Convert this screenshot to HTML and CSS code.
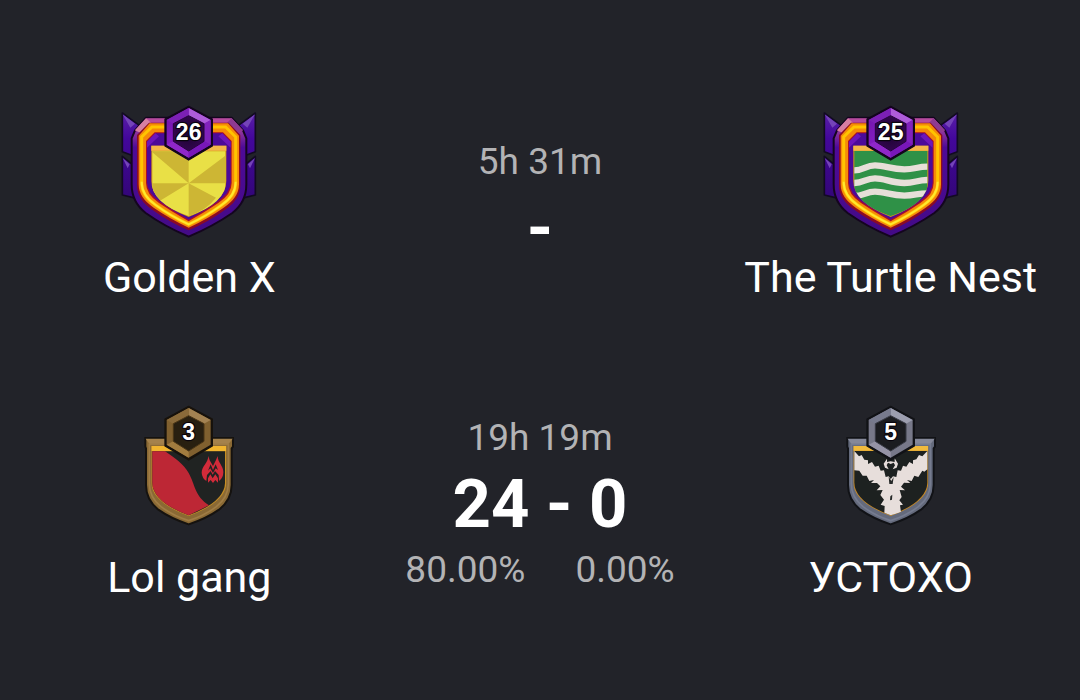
FILE: index.html
```html
<!DOCTYPE html>
<html lang="en">
<head>
<meta charset="utf-8">
<meta name="viewport" content="width=device-width, initial-scale=1">
<title>Wars</title>
<link rel="stylesheet" href="styles.css">
</head>
<body>
<svg class="defs" aria-hidden="true">
  <defs>
    <linearGradient id="wing" x1="0" y1="0" x2="0" y2="1">
      <stop offset="0" stop-color="#5a1fa8"/><stop offset=".3" stop-color="#43079b"/><stop offset="1" stop-color="#330678"/>
    </linearGradient>
    <linearGradient id="rim" x1="0" y1="0" x2="0" y2="1">
      <stop offset="0" stop-color="#b8489c"/><stop offset=".13" stop-color="#8a309c"/><stop offset=".25" stop-color="#4e0a98"/><stop offset="1" stop-color="#430a86"/>
    </linearGradient>
    <linearGradient id="hexPurple" x1="0" y1="0" x2="1" y2="1">
      <stop offset="0" stop-color="#6c13a6"/><stop offset=".5" stop-color="#8a1fc8"/><stop offset="1" stop-color="#6a0fae"/>
    </linearGradient>
    <radialGradient id="hexDark"><stop offset="0" stop-color="#1c0230"/><stop offset="1" stop-color="#32064e"/></radialGradient>
    <clipPath id="field"><path d="M125 152H350V258Q350 322 237 366Q125 322 125 258Z"/></clipPath>
    <clipPath id="plainField"><path d="M125 153H350V262Q350 322 237 363Q125 322 125 262Z"/></clipPath>
    <g id="grandFrame">
      <g fill="url(#wing)" stroke="#120a22" stroke-width="5" stroke-linejoin="round">
        <path d="M38 54L90 92V190L38 170ZM38 184L80 218V310L38 300Z"/>
        <path d="M437 54L385 92V190L437 170ZM437 184L395 218V310L437 300Z"/>
      </g>
      <path d="M39 58L76 86L62 98ZM436 58L399 86L413 98ZM39 189L60 208L54 220ZM436 189L415 208L421 220Z" fill="#7444b8"/>
      <path d="M109 68H366L400 106L410 130V268Q410 322 368 354Q310 394 237 425Q164 394 108 354Q66 322 66 268V130L76 106Z" fill="url(#rim)" stroke="#14051f" stroke-width="6" stroke-linejoin="round"/>
      <path d="M109 70H366L400 106L380 114L356 87H120L94 114L76 106Z" fill="#b64b9e"/>
      <path d="M109 70L128 87L94 114L76 106Z" fill="#d67fa2"/>
      <path d="M366 70L348 87L382 114L400 106Z" fill="#8e3a91"/>
      <path d="M118 83H357L392 120V270Q392 314 346 344Q300 378 237 406Q174 378 128 344Q82 314 82 270V120Z" fill="#8c0b24"/>
      <path d="M120 85H355L388 122V268Q388 308 342 338Q295 371 237 398Q180 371 132 338Q87 308 87 268V122Z" fill="#f58b08"/>
      <path d="M127 96H348L378 126V268Q378 301 336 330Q291 363 237 388Q183 363 138 330Q96 301 96 268V126Z" fill="none" stroke="#ffc400" stroke-width="9"/>
      <path d="M96 260Q96 301 138 330Q183 363 237 388Q291 363 336 330Q378 301 378 260" fill="none" stroke="#ffe82f" stroke-width="6"/>
      <path d="M135 112H340L366 138V264Q366 298 326 324Q285 352 237 379Q190 352 148 324Q109 298 109 264V138Z" fill="#a70e2d"/>
      <path d="M137 115H338L363 140V262Q363 294 322 321Q283 348 237 374Q192 348 152 321Q112 294 112 262V140Z" fill="#4b0a99"/>
      <path d="M137 115L112 140V158L148 124ZM338 115L363 140V158L326 124Z" fill="#6d16ba"/>
      <path d="M125 152H350V258Q350 322 237 366Q125 322 125 258Z" fill="#d19816"/>
      <path d="M125 152H350V167H125Z" fill="#f5b74a"/>
    </g>
    <path id="plainShield" d="M107 129H174V150H300V129H370V155L366 160V270Q366 314 328 344Q290 371 237 388Q184 371 146 344Q109 314 109 270V160L107 155Z"/>
    <path id="hexShape" d="M237 34L308 72V153L237 195L166 153V72Z"/>
    <path id="hexInner" d="M237 62L283 86V139L237 168L191 139V86Z"/>
    <g id="purpleLevel" stroke-linejoin="round">
      <use href="#hexShape" fill="#13051d" stroke="#13051d" stroke-width="4"/>
      <path d="M237 39L303 75V149L237 188L171 149V75Z" fill="url(#hexPurple)"/>
      <path d="M237 39L303 75L283 86L237 62Z" fill="#ae5cda"/>
      <path d="M303 75V149L283 139V86Z" fill="#8122bc"/>
      <path d="M237 39L171 75L191 86L237 62Z" fill="#7c20b5"/>
      <path d="M171 149L237 188V168L191 139Z" fill="#8f27c9"/>
      <path d="M303 149L237 188V168L283 139Z" fill="#7817b8"/>
      <use href="#hexInner" fill="url(#hexDark)" stroke="#25043b" stroke-width="3"/>
    </g>
  </defs>
</svg>

<main class="wars">
  <article class="war">
    <section class="clan">
      <svg class="badge" viewBox="-2 0 480 462" role="img" aria-label="Golden X badge, level 26">
        <use href="#grandFrame"/>
        <g clip-path="url(#field)">
          <path d="M128 169H347V300Q320 334 237 363Q155 334 128 300Z" fill="#e9e046"/>
          <path d="M237 265L128 172V169H237ZM237 265L347 182V265ZM237 265V363Q290 346 319 308ZM237 265H128V300Q134 313 145 321Z" fill="#cdb634"/>
        </g>
        <use href="#purpleLevel"/>
        <text class="level" x="237" y="135">26</text>
      </svg>
      <h2 class="name">Golden X</h2>
    </section>
    <section class="result">
      <p class="time">5h 31m</p>
      <p class="score">-</p>
    </section>
    <section class="clan">
      <svg class="badge" viewBox="-2 0 480 462" role="img" aria-label="The Turtle Nest badge, level 25">
        <use href="#grandFrame"/>
        <g clip-path="url(#field)">
          <path d="M128 168H347V300Q320 334 237 363Q155 334 128 300Z" fill="#2f9147"/>
          <g fill="none" stroke="#e7dfd9" stroke-width="19">
            <path d="M128 226C156 226 162 211 190 211C220 211 238 223 278 223C310 223 316 215 347 215"/>
            <path d="M128 264C156 264 162 250 190 250C220 250 238 264 278 264C310 264 316 255 347 255"/>
            <path d="M128 303C156 303 162 290 190 290C220 290 238 302 278 302C310 302 316 295 347 295"/>
          </g>
        </g>
        <use href="#purpleLevel"/>
        <text class="level" x="237" y="135">25</text>
      </svg>
      <h2 class="name">The Turtle Nest</h2>
    </section>
  </article>

  <article class="war">
    <section class="clan">
      <svg class="badge" viewBox="-2 0 480 462" role="img" aria-label="Lol gang badge, level 3">
        <use href="#plainShield" fill="#8a6934" stroke="#15120f" stroke-width="6"/>
        <path d="M108 131H369L356 148H120Z" fill="#a5824c"/>
        <path d="M119 148H356V266Q356 306 320 335Q286 361 237 377Q188 361 154 335Q119 306 119 266Z" fill="none" stroke="#a07d45" stroke-width="5"/>
        <g clip-path="url(#plainField)">
          <path d="M120 150H355V370H120Z" fill="#c58e24"/>
          <path d="M120 153H355V168H120Z" fill="#f1b52f"/>
          <path d="M128 169H346V263Q345 320 237 361Q129 320 128 263Z" fill="#202322"/>
          <path d="M128 169H166C196 190 222 207 237 234C257 270 254 302 298 331L237 361Q129 320 128 263Z" fill="#bd2735"/>
        </g>
        <path d="M296 183C296 203 276 214 276 233Q277 249 290 258L292 240L303 228L309 239L316 228L327 240L328 258Q341 249 341 231C341 212 324 203 324 183L319 195L310 213L300 196Z" fill="#d22b3a"/>
        <path d="M303 208L310 225L318 208L325 225L318 220L310 234L302 220L295 227Z" fill="#202322"/>
        <path d="M295 263V250L302 238L309 250L317 238L325 250V263L317 255L310 264L303 255Z" fill="#d22b3a"/>
        <g stroke-linejoin="round">
          <use href="#hexShape" fill="#17120c" stroke="#17120c" stroke-width="4"/>
          <path d="M237 39L303 75V149L237 188L171 149V75Z" fill="#80602f"/>
          <path d="M237 39L303 75L283 86L237 62Z" fill="#a38252"/>
          <path d="M237 39L171 75L191 86L237 62Z" fill="#8a6a3a"/>
          <path d="M171 149L237 188V168L191 139Z" fill="#a27c3f"/>
          <use href="#hexInner" fill="#281f10" stroke="#493516" stroke-width="3"/>
        </g>
        <text class="level" x="237" y="135">3</text>
      </svg>
      <h2 class="name">Lol gang</h2>
    </section>
    <section class="result">
      <p class="time">19h 19m</p>
      <p class="score">24 - 0</p>
      <p class="rates"><span>80.00%</span><span>0.00%</span></p>
    </section>
    <section class="clan">
      <svg class="badge" viewBox="-2 0 480 462" role="img" aria-label="УСТОХО badge, level 5">
        <use href="#plainShield" fill="#646a7c" stroke="#111216" stroke-width="6"/>
        <path d="M108 131H369L356 148H120Z" fill="#858899"/>
        <path d="M119 148H356V266Q356 306 320 335Q286 361 237 377Q188 361 154 335Q119 306 119 266Z" fill="none" stroke="#767c90" stroke-width="5"/>
        <g clip-path="url(#plainField)">
          <path d="M120 150H355V370H120Z" fill="#c98a22"/>
          <path d="M120 153H355V167H120Z" fill="#f1ba3c"/>
          <path d="M128 168H347V263Q345 320 237 361Q129 320 128 263Z" fill="#1d2120"/>
          <path d="M128 168L142 184L150 180L158 194L169 196V207L181 201L190 215L201 212L207 227L217 226L222 246L231 244L237 252L244 244L254 246L258 226L268 227L274 212L284 215L293 201L304 207V196L314 193L322 180L332 184L347 168V223L338 230L332 227L320 246L308 242L300 258L286 255L296 264L277 263L268 275L280 286L264 285L270 306L263 316L274 329L265 331L268 352L237 361L218 353L219 333L207 329L217 314L206 300L213 285L195 286L206 274L196 264L178 264L187 255L173 258L165 242L153 242L143 227L128 226Z" fill="#e7dedb"/>
          <path d="M226 191L216 206L220 218L231 223L225 211L229 203L237 207L246 203L250 211L243 223L255 218L259 206L249 190V201L237 199L226 201Z" fill="#e7dedb"/>
          <path d="M231 245L239 258L246 246L243 267H233ZM236 304L242 299L241 314L235 316Z" fill="#252827"/>
        </g>
        <g stroke-linejoin="round">
          <use href="#hexShape" fill="#111216" stroke="#111216" stroke-width="4"/>
          <path d="M237 39L303 75V149L237 188L171 149V75Z" fill="#777889"/>
          <path d="M237 39L303 75L283 86L237 62Z" fill="#9c9eaf"/>
          <path d="M237 39L171 75L191 86L237 62Z" fill="#777a8d"/>
          <path d="M171 149L237 188V168L191 139Z" fill="#9593a6"/>
          <use href="#hexInner" fill="#1b1c20" stroke="#383a44" stroke-width="3"/>
        </g>
        <text class="level" x="237" y="135">5</text>
      </svg>
      <h2 class="name">УСТОХО</h2>
    </section>
  </article>
</main>
</body>
</html>
```
FILE: styles.css
```css
* {
  box-sizing: border-box;
}

body {
  margin: 0;
  background: #222329;
  color: #fff;
  font-family: Roboto, "Noto Sans", sans-serif;
}

h2,
p {
  margin: 0;
  font-weight: 400;
}

.defs {
  position: absolute;
  width: 0;
  height: 0;
}

.wars {
  padding: 54px 14px 40px;
}

.war {
  display: grid;
  grid-template-columns: repeat(3, minmax(0, 1fr));
  align-items: center;
  min-height: 300px;
}

.clan {
  display: flex;
  flex-direction: column;
  align-items: center;
  padding-bottom: 8px;
}

.badge {
  display: block;
  width: 160px;
  height: 154px;
}

.level {
  fill: #fff;
  stroke: #08040c;
  stroke-width: 7px;
  stroke-linejoin: round;
  paint-order: stroke;
  font: 700 69px "Liberation Sans", sans-serif;
  text-anchor: middle;
}

.name {
  font-size: 43px;
  line-height: 56px;
  white-space: nowrap;
}

.result {
  text-align: center;
}

.time,
.rates {
  color: #b3b3b5;
  font-size: 37px;
  line-height: 48px;
}

.score {
  font-size: 67px;
  font-weight: 700;
  line-height: 84px;
}

.rates {
  display: flex;
  justify-content: center;
  gap: 50px;
}
```
